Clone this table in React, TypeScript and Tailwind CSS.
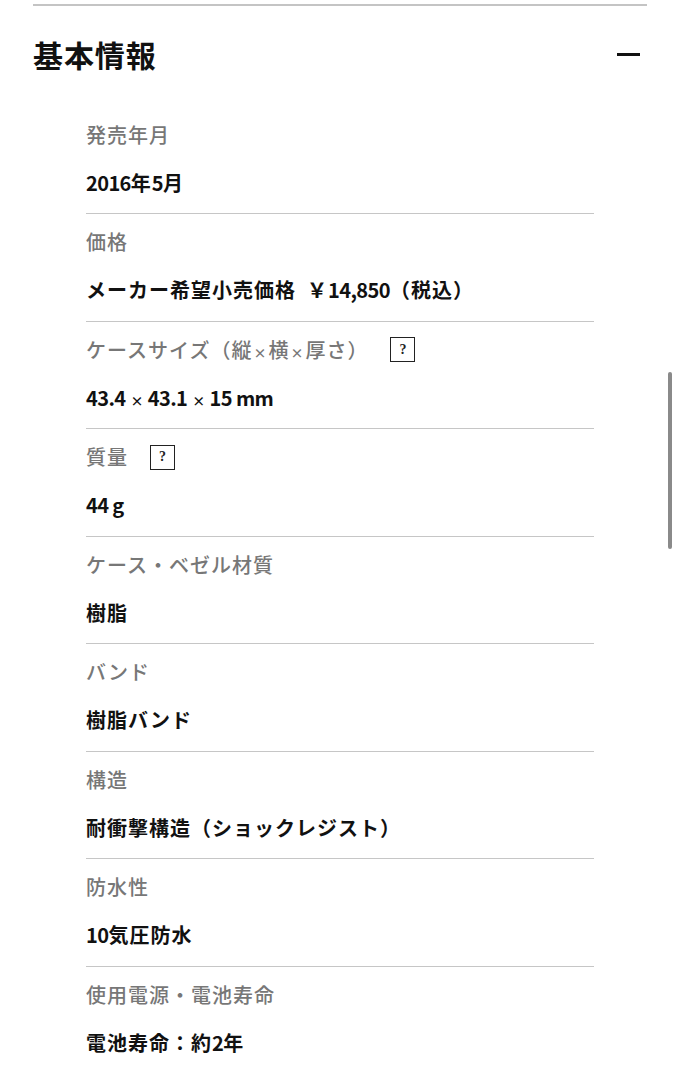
import React from "react"

type Spec = {
  label: React.ReactNode
  value: React.ReactNode
  help?: boolean
}

// Small, tight multiplication sign as in the original type.
const X = () => <span className="mx-[1px] text-[13px] font-bold">×</span>

// Latin runs are set tighter than the kana/kanji around them.
const mixed = (text: string) =>
  text.split(/([\x20-\x7E]+)/).map((part, i) =>
    /^[\x20-\x7E]+$/.test(part) ? (
      <span key={i} className="tracking-[-0.03em]">
        {part}
      </span>
    ) : (
      part
    )
  )

const SPECS: Spec[] = [
  { label: "発売年月", value: mixed("2016年5月") },
  { label: "価格", value: mixed("メーカー希望小売価格\u2002￥14,850（税込）") },
  {
    label: (
      <>
        ケースサイズ（縦<X />横<X />厚さ）
      </>
    ),
    value: (
      <span className="tracking-[-0.03em]">
        43.4 <X /> 43.1 <X /> 15 mm
      </span>
    ),
    help: true,
  },
  { label: "質量", value: mixed("44 g"), help: true },
  { label: "ケース・ベゼル材質", value: "樹脂" },
  { label: "バンド", value: "樹脂バンド" },
  { label: "構造", value: "耐衝撃構造（ショックレジスト）" },
  { label: "防水性", value: mixed("10気圧防水") },
  { label: "使用電源・電池寿命", value: mixed("電池寿命：約2年") },
]

const HelpBox = () => (
  <span className="ml-[22px] inline-flex h-[25px] w-[25px] items-center justify-center border-[1.5px] border-[#222] font-['Liberation_Serif',serif] text-[14px] font-bold leading-none tracking-normal text-[#222]">
    ?
  </span>
)

const SpecRow = ({ spec, first }: { spec: Spec; first: boolean }) => (
  <div
    className={
      first
        ? "flex h-[107px] flex-col pt-[14px]"
        : "flex h-[107.5px] flex-col border-t-[1.5px] border-[#c6c6c6] pt-[13px]"
    }
  >
    <div className="flex h-[30px] items-center text-[20px] font-medium tracking-[0.05em] text-[#777]">
      <span>{spec.label}</span>
      {spec.help && <HelpBox />}
    </div>
    <div className="mt-[18px] flex h-[30px] items-center text-[20px] font-bold tracking-[0.05em] text-[#111]">
      <span>{spec.value}</span>
    </div>
  </div>
)

export default function App() {
  return (
    <div className="relative h-[1080px] w-[680px] overflow-hidden bg-white font-['Noto_Sans_CJK_JP','Noto_Sans',sans-serif]">
      <div className="mx-[33px] mt-[4px] border-t-2 border-[#c4c4c4]" />
      <div className="flex h-[100px] items-center justify-between pb-[3px] pl-[33px] pr-[40px]">
        <h2 className="text-[30px] font-bold tracking-[0.03em] text-[#111]">基本情報</h2>
        <span className="block h-[2.5px] w-[23px] bg-[#111]" />
      </div>
      <div className="ml-[86px] w-[508px]">
        {SPECS.map((spec, i) => (
          <SpecRow key={i} spec={spec} first={i === 0} />
        ))}
      </div>
      {/* scrollbar thumb */}
      <div className="absolute left-[668px] top-[372px] h-[177px] w-[4px] rounded-full bg-[#8a8a8a]" />
    </div>
  )
}
